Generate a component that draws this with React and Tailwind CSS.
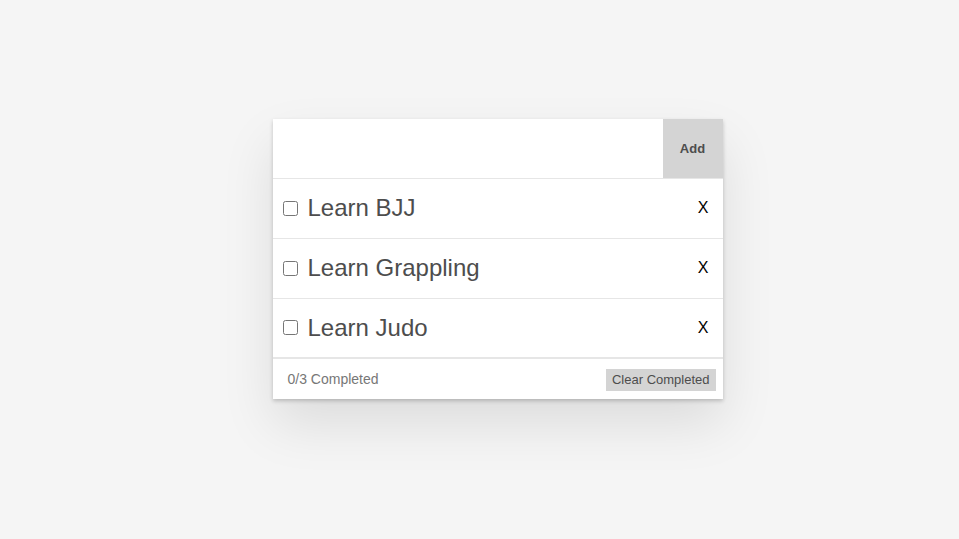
import { useState } from "react";

const initialTodos = [
  { id: 1, text: "Learn BJJ", done: false },
  { id: 2, text: "Learn Grappling", done: false },
  { id: 3, text: "Learn Judo", done: false },
];

export default function App() {
  const [todos, setTodos] = useState(initialTodos);
  const [text, setText] = useState("");

  const add = () => {
    if (!text.trim()) return;
    setTodos([...todos, { id: Date.now(), text, done: false }]);
    setText("");
  };

  const doneCount = todos.filter((t) => t.done).length;

  return (
    <div
      className="min-h-screen bg-[#f5f5f5] flex justify-center pt-[119px] pl-[36px]"
      style={{ fontFamily: '"Liberation Sans", Arial, sans-serif' }}
    >
      <div className="w-[450px] h-fit bg-white shadow-[0_2px_4px_rgba(0,0,0,0.2),0_25px_50px_rgba(0,0,0,0.1)]">
        <div className="flex h-[60px] border-b border-[#e6e6e6]">
          <input
            className="flex-1 px-4 text-2xl text-[#4d4d4d] outline-none"
            value={text}
            onChange={(e) => setText(e.target.value)}
          />
          <button
            onClick={add}
            className="w-[60px] bg-[#d4d4d4] text-[13px] font-bold text-[#4d4d4d]"
          >
            Add
          </button>
        </div>
        {todos.map((t, i) => (
          <div
            key={t.id}
            className={`flex items-center h-[60px] pl-[10px] pr-[14px] pb-[1px] ${
              i === todos.length - 1 ? "border-b-2" : "border-b"
            } border-[#e6e6e6]`}
          >
            <input
              type="checkbox"
              checked={t.done}
              onChange={() =>
                setTodos(todos.map((x) => (x.id === t.id ? { ...x, done: !x.done } : x)))
              }
              className="w-[15px] h-[15px] m-0"
            />
            <span className="ml-[10px] flex-1 text-2xl text-[#4d4d4d]">{t.text}</span>
            <button
              onClick={() => setTodos(todos.filter((x) => x.id !== t.id))}
              className="text-base text-black"
            >
              X
            </button>
          </div>
        ))}
        <div className="flex items-center justify-between h-[40px] pl-[15px] pr-[7px]">
          <span className="text-sm text-[#777] -mt-[1px]">
            {doneCount}/{todos.length} Completed
          </span>
          <button
            onClick={() => setTodos(todos.filter((t) => !t.done))}
            className="bg-[#d4d4d4] text-[13px] text-[#4d4d4d] px-[6px] h-[22px] mt-[1px]"
          >
            Clear Completed
          </button>
        </div>
      </div>
    </div>
  );
}
